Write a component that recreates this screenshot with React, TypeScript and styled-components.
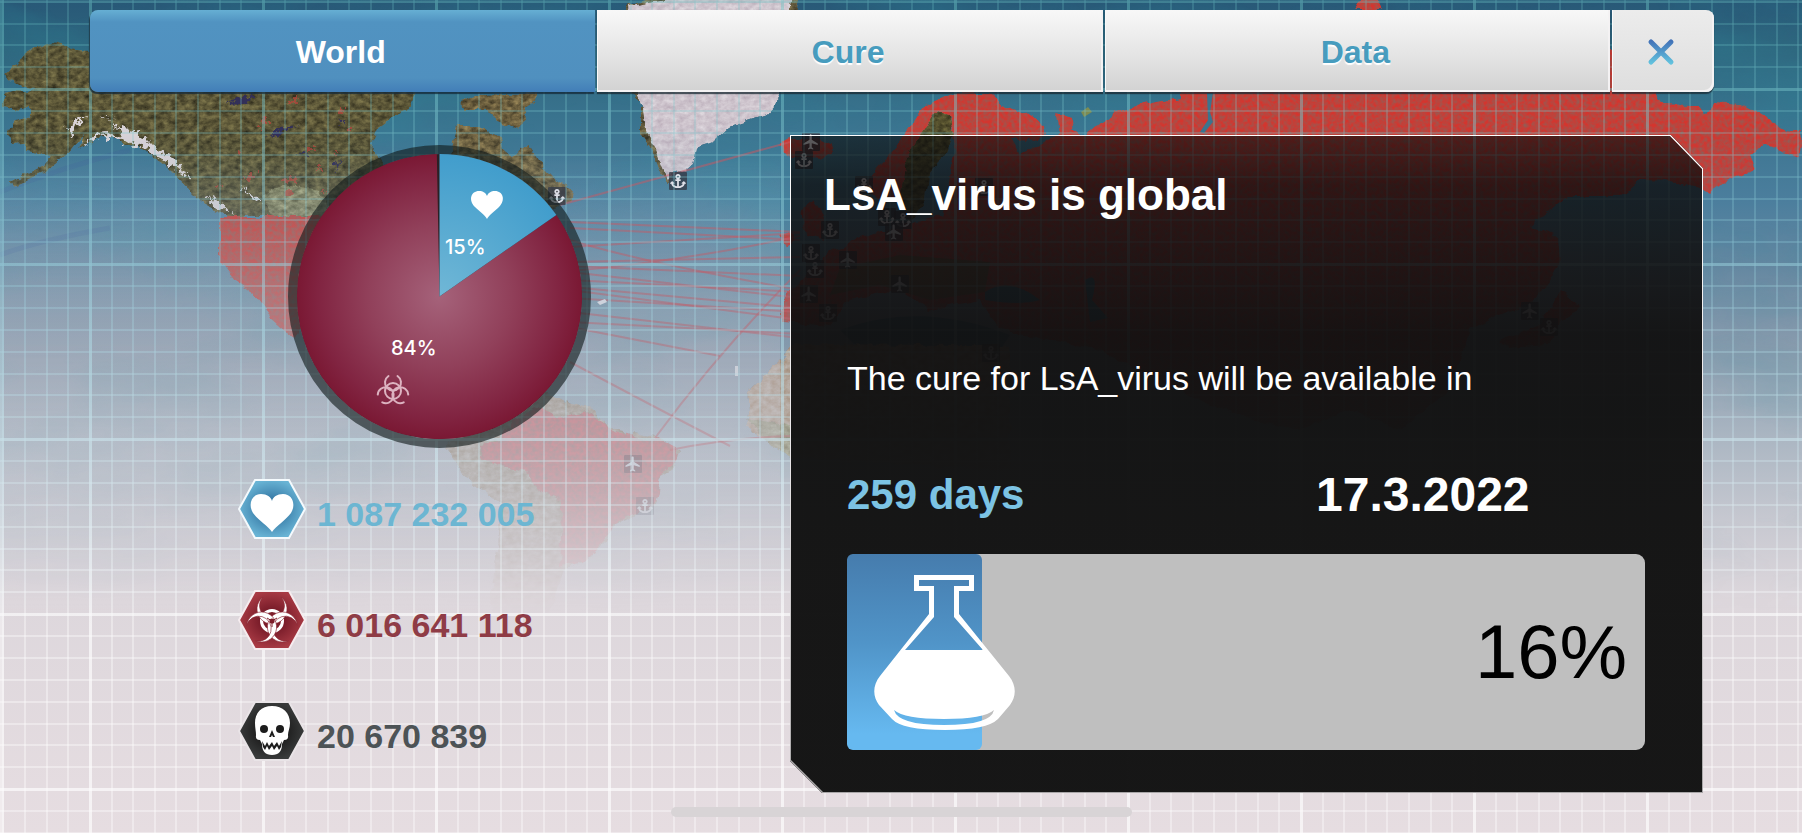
import React, { useState } from "react";
import styled, { createGlobalStyle, css } from "styled-components";
import { FaAnchor } from "react-icons/fa";
import { MdFlight } from "react-icons/md";

const GlobalStyle = createGlobalStyle`
  *, *::before, *::after { box-sizing: border-box; }
  body {
    margin: 0;
    background: #e5dce0;
    font-family: "Liberation Sans", Arial, Helvetica, sans-serif;
  }
`;

const Page = styled.div`
  position: relative;
  display: flex;
  flex-direction: column;
  min-height: 100vh;
  overflow: hidden;
`;

/* ---------- world map backdrop ---------- */

const Backdrop = styled.svg`
  position: absolute;
  inset: 0;
  width: 100%;
  height: 100%;

  filter {
    color-interpolation-filters: sRGB;
  }
`;

type Marker = { kind: "port" | "airport"; x: number; y: number };

const markers: Marker[] = [
  { kind: "port", x: 678, y: 181 },
  { kind: "port", x: 557, y: 196 },
  { kind: "airport", x: 811, y: 142 },
  { kind: "port", x: 804, y: 160 },
  { kind: "port", x: 864, y: 185 },
  { kind: "port", x: 984, y: 187 },
  { kind: "port", x: 887, y: 217 },
  { kind: "port", x: 903, y: 220 },
  { kind: "port", x: 830, y: 230 },
  { kind: "airport", x: 894, y: 232 },
  { kind: "port", x: 811, y: 253 },
  { kind: "port", x: 815, y: 269 },
  { kind: "airport", x: 848, y: 260 },
  { kind: "airport", x: 900, y: 284 },
  { kind: "airport", x: 809, y: 294 },
  { kind: "port", x: 828, y: 313 },
  { kind: "port", x: 991, y: 353 },
  { kind: "airport", x: 1530, y: 311 },
  { kind: "port", x: 1549, y: 327 },
  { kind: "airport", x: 633, y: 464 },
  { kind: "port", x: 645, y: 506 },
];

const routes = [
  "M560 205 L790 142",
  "M570 222 L800 232",
  "M570 228 L800 240",
  "M570 247 L800 233",
  "M560 272 Q680 262 800 236",
  "M570 240 Q640 262 800 290",
  "M570 262 L800 257",
  "M570 266 L800 276",
  "M570 272 L800 298",
  "M570 280 L800 292",
  "M570 287 L800 308",
  "M570 290 L800 320",
  "M570 298 L800 312",
  "M570 312 L800 338",
  "M570 322 L800 334",
  "M575 328 L720 356",
  "M655 438 Q720 350 800 270",
  "M570 362 Q660 410 730 446",
  "M670 450 Q730 438 790 436",
];

const WorldMap = () => (
  <Backdrop viewBox="0 0 1802 833" preserveAspectRatio="xMidYMin slice" aria-hidden="true">
    <defs>
      <linearGradient id="sea" x1="0" y1="0" x2="0" y2="1">
        <stop offset="0" stopColor="#285877" />
        <stop offset="0.06" stopColor="#2f667e" />
        <stop offset="0.14" stopColor="#39738e" />
        <stop offset="0.24" stopColor="#4b7e9d" />
        <stop offset="0.32" stopColor="#6588a1" />
        <stop offset="0.42" stopColor="#8a9cae" />
        <stop offset="0.53" stopColor="#acb7c3" />
        <stop offset="0.63" stopColor="#c8c9d1" />
        <stop offset="0.72" stopColor="#ddd7dc" />
        <stop offset="1" stopColor="#e6dde1" />
      </linearGradient>
      <linearGradient id="fade" gradientUnits="userSpaceOnUse" x1="0" y1="0" x2="0" y2="833">
        <stop offset="0.15" stopColor="#fff" />
        <stop offset="0.3" stopColor="#ccc" />
        <stop offset="0.42" stopColor="#a0a0a0" />
        <stop offset="0.54" stopColor="#747474" />
        <stop offset="0.64" stopColor="#383838" />
        <stop offset="0.74" stopColor="#000" />
      </linearGradient>
      <linearGradient id="haze" gradientUnits="userSpaceOnUse" x1="0" y1="0" x2="0" y2="833">
        <stop offset="0.18" stopColor="#fff" stopOpacity="0" />
        <stop offset="0.36" stopColor="#f2e2e6" stopOpacity="0.26" />
        <stop offset="0.5" stopColor="#f2e2e6" stopOpacity="0.32" />
      </linearGradient>
      <mask id="mapMask" maskUnits="userSpaceOnUse" x="0" y="0" width="1802" height="833">
        <rect width="1802" height="833" fill="url(#fade)" />
      </mask>
      <filter id="terrain" x="-5%" y="-5%" width="110%" height="110%">
        <feTurbulence type="fractalNoise" baseFrequency="0.09" numOctaves="3" seed="4" result="edge" />
        <feDisplacementMap in="SourceGraphic" in2="edge" scale="8" xChannelSelector="R" yChannelSelector="G" result="land" />
        <feTurbulence type="fractalNoise" baseFrequency="0.14 0.2" numOctaves="4" seed="9" result="noise" />
        <feColorMatrix in="noise" type="matrix" values="0.9 0 0 0 -0.02  0.9 0 0 0 -0.02  0.9 0 0 0 -0.02  0 0 0 0 0.6" result="grain" />
        <feBlend in="grain" in2="land" mode="overlay" result="mixed" />
        <feComposite in="mixed" in2="land" operator="in" />
      </filter>
      <filter id="infected" x="-5%" y="-5%" width="110%" height="110%">
        <feTurbulence type="fractalNoise" baseFrequency="0.08" numOctaves="3" seed="2" result="edge" />
        <feDisplacementMap in="SourceGraphic" in2="edge" scale="8" xChannelSelector="R" yChannelSelector="G" result="land" />
        <feTurbulence type="fractalNoise" baseFrequency="0.25" numOctaves="2" seed="7" result="noise" />
        <feColorMatrix in="noise" type="matrix" values="0 0 0 0 0.58  0 0 0 0 0.36  0 0 0 0 0.33  1.6 0 0 0 -0.45" result="grain" />
        <feMerge result="mixed">
          <feMergeNode in="land" />
          <feMergeNode in="grain" />
        </feMerge>
        <feComposite in="mixed" in2="land" operator="in" />
      </filter>
      <filter id="waves" x="0" y="0" width="100%" height="100%">
        <feTurbulence type="fractalNoise" baseFrequency="0.006 0.014" numOctaves="5" seed="12" />
        <feColorMatrix type="matrix" values="0 0 0 0 0.18  0 0 0 0 0.55  0 0 0 0 0.62  2.4 0 0 0 -1" />
      </filter>
      <filter id="specks" x="-5%" y="-5%" width="110%" height="110%">
        <feTurbulence type="fractalNoise" baseFrequency="0.18" numOctaves="3" seed="3" result="noise" />
        <feDisplacementMap in="SourceGraphic" in2="noise" scale="14" xChannelSelector="R" yChannelSelector="G" />
      </filter>
      <linearGradient id="gridTint" gradientUnits="userSpaceOnUse" x1="0" y1="0" x2="0" y2="833">
        <stop offset="0" stopColor="#6cc3c4" />
        <stop offset="0.3" stopColor="#94cfdc" />
        <stop offset="0.6" stopColor="#dcecf2" />
        <stop offset="0.75" stopColor="#ffffff" />
      </linearGradient>
      <linearGradient id="gridStrength" gradientUnits="userSpaceOnUse" x1="0" y1="0" x2="0" y2="833">
        <stop offset="0" stopColor="#000" stopOpacity="0.4" />
        <stop offset="0.25" stopColor="#000" stopOpacity="0.3" />
        <stop offset="0.6" stopColor="#000" stopOpacity="0.1" />
      </linearGradient>
      <pattern id="gridLines" patternUnits="userSpaceOnUse" x="89" y="88" width="173" height="175">
        {[1, 2, 3, 4, 5, 6, 7].map((n) => (
          <React.Fragment key={n}>
            <rect x={Math.round(n * 21.6)} y="0" width="2" height="175" fill="#fff" fillOpacity="0.4" />
            <rect x="0" y={Math.round(n * 21.9)} width="173" height="2" fill="#fff" fillOpacity="0.4" />
          </React.Fragment>
        ))}
        <rect x="0" y="0" width="3" height="175" fill="#fff" fillOpacity="0.7" />
        <rect x="0" y="0" width="173" height="3" fill="#fff" fillOpacity="0.7" />
      </pattern>
      <mask id="gridMask" maskUnits="userSpaceOnUse" x="0" y="0" width="1802" height="833">
        <rect width="1802" height="833" fill="url(#gridLines)" />
        <rect x="0" y="0" width="4" height="833" fill="#fff" fillOpacity="0.5" />
        <rect x="0" y="0" width="1802" height="3" fill="#fff" fillOpacity="0.3" />
        <rect width="1802" height="833" fill="url(#gridStrength)" />
      </mask>
    </defs>

    <rect width="1802" height="833" fill="url(#sea)" />
    <g mask="url(#mapMask)">
      <rect width="1802" height="620" filter="url(#waves)" opacity="0.25" />
      <path d="M0 255 Q40 240 110 228 M0 192 Q60 168 130 150" stroke="#3f6398" strokeWidth="5" strokeOpacity="0.3" fill="none" />

      <g filter="url(#terrain)">
        <path
          fill="#645e3c"
          d="M5 74 L12 68 20 64 23 56 36 48 54 42 64 45 76 50 92 51 H420 L415 95 406 112 388 120 377 128 371 143 377 155 384 166 V320 H300 L292 235 288 216 H228 L206 206 196 196 180 181 166 166 146 151 126 143 103 135 96 140 79 148 84 134 70 152 48 170 14 186 10 182 44 166 50 155 26 151 26 144 12 145 6 134 14 122 31 115 31 106 20 110 3 106 3 94 16 91 28 93 34 88 16 83Z"
        />
        <path fill="#776844" d="M457 126 L474 126 501 137 503 150 513 158 526 144 537 160 557 180 573 190 572 199 560 206 520 230 440 210 452 152Z" />
        <path fill="#776844" d="M457 102 L475 95 536 93 535 101 526 107 527 121 517 129 497 121 486 110 465 110Z" />
        <path fill="#8b8a64" d="M262 196 L282 184 320 190 330 216 272 216Z" />
        <path fill="#6b6142" d="M625 6 L660 -4 800 -4 786 60 640 108 640 133 652 152 658 168 668 184 690 150 631 94Z" />
      </g>
      <g filter="url(#specks)" fill="#d9d3d8">
        <path d="M66 130 L78 120 90 117 76 126 72 138Z M98 115 L116 118 104 117Z M82 144 L96 134 108 133 124 136 114 126 134 130 148 140 160 152 174 158 182 170 192 178 186 176 170 164 158 156 140 146 122 140 104 136Z M206 195 L222 203 232 214 216 207Z M240 184 L262 202 256 202Z" />
      </g>
      <g filter="url(#specks)" fill="#b8453c" opacity="0.7">
        <path d="M244 174 h12 v6 h-12Z M284 178 h14 v4 h-14Z M262 118 h7 v4 h-7Z M290 99 h9 v3 h-9Z M316 168 h8 v3 h-8Z M310 146 h5 v4 h-5Z M236 150 h5 v3 h-5Z M334 150 h5 v4 h-5Z M286 192 h7 v4 h-7Z M322 190 h5 v3 h-5Z M256 126 h5 v3 h-5Z M348 128 h6 v3 h-6Z M216 184 h5 v3 h-5Z M340 108 h5 v3 h-5Z" />
      </g>
      <path filter="url(#specks)" d="M228 104 Q236 94 254 98 Q242 106 228 104Z M266 138 L280 128 300 125 280 134Z M296 153 L304 150 308 154Z M334 168 l4 -8 l2 4 l-4 8Z M338 122 l8 -4 l0 6Z" fill="#332f58" />
      <path
        filter="url(#terrain)"
        fill="#d2c9d1"
        d="M628 6 L690 -4 792 -4 782 60 778 103 767 115 745 122 728 128 713 142 696 148 692 165 686 170 674 174 668 180 661 165 656 150 646 132 643 110 636 92Z"
      />

      <g filter="url(#infected)" fill="#d4352e">
        <path d="M220 216 H420 V330 H300 L296 338 286 332 272 320 268 312 254 294 234 281 220 262Z" />
        <path d="M780 143 L790 137 802 141 816 138 831 146 833 153 822 160 804 159 790 156Z" />
        <path d="M1355 10 L1362 0 1376 -2 1382 10Z" />
        <path
          d="M953 93 L925 105 912 125 898 145 880 165 864 186 872 196 892 200 905 198 928 140 950 116 954 150 948 190 942 215 900 226 862 236 845 246 830 252 792 290 782 300 782 322 830 326 850 300 900 290 930 310 980 300 1000 330 1100 350 1200 400 1250 420 1300 430 1350 410 1400 430 1450 390 1470 330 1500 316 1525 306 1545 290 1560 260 1558 236 1530 227 1568 197 1620 197 1640 180 1665 181 1700 188 1709 193 1730 179 1756 170 1750 155 1764 143 1782 151 1800 156 1802 132 1786 130 1762 115 1742 104 1714 102 1706 113 1700 105 1662 104 1655 93 1640 50 H1180 V98 L1150 103 1112 113 1086 136 1074 128 1071 118 1057 114 1061 132 1030 150 1020 155 1010 138 1036 141 1046 134 1044 124 1030 115 1002 104 990 93Z"
        />
        <path d="M800 212 L814 200 824 215 823 240 806 234Z M780 236 L790 230 797 240 786 248Z" />
        <path d="M1560 290 L1582 308 1560 320 1550 345 1508 348 1500 340 1540 325Z" />
      </g>
      <path d="M1207 93 L1213 93 1210 112 1213 122 1204 133 1200 132 1208 120Z" fill="#3b748e" />
      <path d="M936 112 L950 116 953 135 945 155 928 175 925 200 910 222 900 200 905 165 916 140Z" fill="#5a5530" filter="url(#terrain)" />
      <path d="M1081 112 L1088 107 1092 112 1084 117Z" fill="#7d8b52" />
      <path d="M840 268 L900 255 990 262 985 292 930 300 880 285 830 295Z" fill="#5d6038" opacity="0.7" />
      <path d="M985 292 Q1010 276 1040 300 Q1020 306 985 300Z M1085 280 Q1100 270 1092 300 L1108 318 1090 322Z M840 330 Q920 300 1010 335 L1000 350 860 350Z" fill="#31708c" />
      <path filter="url(#terrain)" fill="#c9a98c" d="M795 344 L783 358 764 376 748 392 750 412 746 428 770 442 794 458 1010 470 1010 345Z" />
      <path filter="url(#terrain)" fill="#a59a6c" d="M746 418 L795 426 V460 L770 444Z" />

      <path
        filter="url(#terrain)"
        fill="#b09c82"
        d="M500 380 L557 397 573 403 593 408 602 420 617 430 660 438 679 452 674 466 660 476 658 493 653 507 630 517 612 526 606 540 583 563 564 568 555 600 520 650 500 650 490 600 498 543 500 503 472 484 458 467 445 448Z"
      />
      <path
        filter="url(#infected)"
        fill="#ea4a4c"
        d="M500 440 L510 425 535 407 550 412 556 418 592 411 602 422 617 431 637 438 660 439 676 447 679 454 674 466 660 476 658 493 653 507 630 517 612 526 606 540 583 563 560 566 562 502 540 492 526 472 498 466 480 456 481 446Z"
      />
      <path d="M0 150 H780 V833 H0Z" fill="url(#haze)" />

      <g fill="none" stroke="#d8545c" strokeWidth="2" strokeOpacity="0.5">
        {routes.map((d) => (
          <path key={d} d={d} />
        ))}
      </g>
      <path d="M597 302 l8 -3 l2 3 l-7 3Z M735 366 l3 0 l0 10 l-3 0Z" fill="#f3eef2" />

      {markers.map(({ kind, x, y }) => (
        <g key={`${x}-${y}`}>
          <rect x={x - 9} y={y - 9} width="18" height="18" rx="1" fill="#33333f" fillOpacity={y > 400 ? 0.4 : 0.8} />
          {kind === "port" ? (
            <FaAnchor x={x - 8} y={y - 8} size={16} color="#efeaf0" />
          ) : (
            <MdFlight x={x - 9} y={y - 9} size={18} color="#efeaf0" />
          )}
        </g>
      ))}
    </g>
    <rect width="1802" height="833" fill="url(#gridTint)" mask="url(#gridMask)" />
  </Backdrop>
);

/* ---------- tab bar ---------- */

const TabBar = styled.nav`
  position: relative;
  display: grid;
  grid-template-columns: 1fr 1fr 1fr 102px;
  gap: 2px;
  height: 82px;
  margin: 10px 88px 0 90px;
`;

const barButton = css`
  display: flex;
  align-items: center;
  justify-content: center;
  padding: 2px 4px 0 0;
  border: 0;
  cursor: pointer;
  box-shadow: inset -2px -2px 0 #f4f2f3, inset 1px 0 0 #fafafa, 0 2px 1px rgba(25, 40, 50, 0.75);
`;

const Tab = styled.button<{ $active: boolean }>`
  ${barButton}
  font: bold 32px/40px "Liberation Sans", Arial, sans-serif;
  color: #479cbe;
  text-shadow: 0 2px 1px #ffffff;
  background: linear-gradient(#f8f8f8, #e4e4e4 55%, #d2d2d2);

  &:first-child {
    border-radius: 8px 0 0 8px;
  }

  ${({ $active }) =>
    $active &&
    css`
      color: #ffffff;
      text-shadow: none;
      background: linear-gradient(#66afd3, #5193c1 12px, #5090bf 68px, #427eb8);
      box-shadow: -1px 2px 1px rgba(20, 40, 55, 0.8);
    `}
`;

const CloseButton = styled.button`
  ${barButton}
  border-radius: 0 8px 8px 0;
  background: linear-gradient(#ececec, #dedede);
`;

/* ---------- main area ---------- */

const Main = styled.main`
  position: relative;
  flex: 1;
  display: grid;
  grid-template-columns: 702fr 913fr;
  padding: 43px 99px 0 88px;
`;

const Overview = styled.section`
  display: flex;
  flex-direction: column;
  align-items: center;
  gap: 31px;
  padding-top: 10px;
`;

const Chart = styled.svg`
  width: 303px;
  height: 303px;
`;

const ChartLabel = styled.text`
  font: 500 20px Inter, sans-serif;
  fill: #ffffff;
`;

const StatList = styled.ul`
  display: flex;
  flex-direction: column;
  gap: 51px;
  width: 402px;
  margin: 0;
  padding: 0;
  list-style: none;
`;

const Stat = styled.li`
  display: flex;
  align-items: flex-end;
  gap: 11px;
  height: 60px;
`;

const StatIcon = styled.svg`
  width: 68px;
  height: 60px;
`;

const StatValue = styled.span<{ $color: string }>`
  font-size: 34px;
  font-weight: bold;
  line-height: 50px;
  white-space: nowrap;
  color: ${({ $color }) => $color};
`;

const SmallBiohazard = ({ x, y }: { x: number; y: number }) => (
  <g transform={`translate(${x} ${y})`} fill="none" stroke="#eccbd6" strokeWidth="2" strokeLinecap="round" opacity="0.85">
    <circle r="8" />
    {[0, 120, 240].map((angle) => (
      <path key={angle} transform={`rotate(${angle})`} d="M-4.5 -15 A8 8 0 1 0 4.5 -15" />
    ))}
  </g>
);

const slicePoint = (share: number, radius: number) => {
  const angle = share * 2 * Math.PI;
  return `${(151.5 + radius * Math.sin(angle)).toFixed(2)} ${(151.5 - radius * Math.cos(angle)).toFixed(2)}`;
};

const InfectionChart = () => (
  <Chart viewBox="0 0 303 303" role="img" aria-label="15% healthy, 84% infected">
    <defs>
      <radialGradient id="infectedSlice" gradientUnits="userSpaceOnUse" cx="151.5" cy="151.5" r="143">
        <stop offset="0" stopColor="#a5627a" />
        <stop offset="0.5" stopColor="#91405a" />
        <stop offset="0.85" stopColor="#812441" />
        <stop offset="1" stopColor="#7a1833" />
      </radialGradient>
      <radialGradient id="healthySlice" gradientUnits="userSpaceOnUse" cx="151.5" cy="151.5" r="143">
        <stop offset="0" stopColor="#70b7d6" />
        <stop offset="1" stopColor="#419dcc" />
      </radialGradient>
    </defs>
    <circle cx="151.5" cy="151.5" r="147" fill="none" stroke="#121b1b" strokeOpacity="0.62" strokeWidth="9" />
    <circle cx="151.5" cy="151.5" r="142.5" fill="#2b2025" />
    <path d={`M151.5 151.5 L${slicePoint(0.153, 142.5)} A142.5 142.5 0 1 1 ${slicePoint(0.997, 142.5)}Z`} fill="url(#infectedSlice)" />
    <path d={`M151.5 151.5 L${slicePoint(0, 142.5)} A142.5 142.5 0 0 1 ${slicePoint(0.153, 142.5)}Z`} fill="url(#healthySlice)" />
    <path d="M199 74 C197 70 191 66 187 62 C180 55 183 46 191 46 C195 46 198 48 199 51 C200 48 203 46 207 46 C215 46 218 55 211 62 C207 66 201 70 199 74Z" fill="#fff" />
    <ChartLabel x="157" y="109">15%</ChartLabel>
    <ChartLabel x="103" y="210">84%</ChartLabel>
    <SmallBiohazard x={105} y={246} />
  </Chart>
);

const Hexagon = ({ id, inner, outer, edge, children }: { id: string; inner: string; outer: string; edge: string; children: React.ReactNode }) => (
  <StatIcon viewBox="0 0 68 60" aria-hidden="true">
    <defs>
      <radialGradient id={id}>
        <stop offset="0.4" stopColor={inner} />
        <stop offset="1" stopColor={outer} />
      </radialGradient>
    </defs>
    <path d="M17 1 H51 L67 30 51 59 H17 L1 30Z" fill={`url(#${id})`} stroke={edge} strokeWidth="2" />
    {children}
  </StatIcon>
);

const HealthyIcon = () => (
  <Hexagon id="hexHealthy" inner="#3c80ab" outer="#68b3d4" edge="#f4fafd">
    <path d="M34 53 C30 47 20 41 15 34 C10 26 13 15 23 15 C29 15 33 18 34 22 C35 18 39 15 45 15 C55 15 58 26 53 34 C48 41 38 47 34 53Z" fill="#fff" />
  </Hexagon>
);

const InfectedIcon = () => (
  <Hexagon id="hexInfected" inner="#7c1e2b" outer="#a83a44" edge="#f6ecef">
    <g transform="translate(34 31)">
      <circle r="10.5" fill="none" stroke="#fff" strokeWidth="3" />
      {[0, 120, 240].map((angle) => (
        <path
          key={angle}
          transform={`rotate(${angle})`}
          d="M-9 -24 A15 15 0 1 0 9 -24 A12.5 12.5 0 1 1 -9 -24Z"
          fill="#fff"
          stroke="#8c2633"
          strokeWidth="0.6"
        />
      ))}
      <circle r="2.6" fill="#7c1e2b" />
      <path d="M0 0 V6 M0 0 L5 -3 M0 0 L-5 -3" stroke="#7c1e2b" strokeWidth="1" />
    </g>
  </Hexagon>
);

const DeadIcon = () => (
  <Hexagon id="hexDead" inner="#1c1c1c" outer="#393b3b" edge="#e9e4e7">
    <path
      d="M34 5 C45 5 52 12 52 22 C52 27 50 30 50 34 Q51 39 46 39 L44 43 Q44 54 34 54 Q24 54 24 43 L22 39 Q17 39 18 34 C18 30 17 27 17 22 C17 12 23 5 34 5Z"
      fill="#fff"
    />
    <ellipse cx="26" cy="28" rx="4" ry="4" fill="#1c1c1c" />
    <ellipse cx="42" cy="28" rx="4" ry="4" fill="#1c1c1c" />
    <path d="M34 29 L31 36 33 36 34 34 35 36 37 36Z" fill="#1c1c1c" />
    <path d="M24 40 L27 45 29 41 31 45 34 41 36 45 39 41 41 45 44 40 43 46 41 49 39 45 36 49 34 45 31 49 29 45 27 49 25 46Z" fill="#1c1c1c" />
  </Hexagon>
);

/* ---------- cure panel ---------- */

const Panel = styled.section`
  position: relative;
  display: flex;
  flex-direction: column;
  padding: 34px 58px 43px 57px;
  color: #ffffff;
  background: linear-gradient(
    rgba(8, 8, 8, 0.62),
    rgba(10, 8, 8, 0.78) 50px,
    rgba(13, 11, 11, 0.87) 130px,
    rgba(14, 13, 13, 0.94) 200px,
    rgba(16, 16, 16, 0.97) 290px,
    rgba(20, 20, 20, 0.99) 400px
  );
  clip-path: polygon(0 0, calc(100% - 32px) 0, 100% 33px, 100% 100%, 32px 100%, 0 calc(100% - 32px));

  &::before {
    content: "";
    position: absolute;
    inset: 0;
    background: linear-gradient(#ffffff, #e8e4e6 50%, #a8a6a7);
    clip-path: polygon(
      evenodd,
      0 0, calc(100% - 32px) 0, 100% 33px, 100% 100%, 32px 100%, 0 calc(100% - 32px), 0 0,
      1px 1px, calc(100% - 33px) 1px, calc(100% - 1px) 34px, calc(100% - 1px) calc(100% - 1px), 33px calc(100% - 1px), 1px calc(100% - 33px), 1px 1px
    );
  }
`;

const Title = styled.h1`
  margin: 0 0 137px -23px;
  font-size: 44px;
  line-height: 52px;
`;

const Message = styled.p`
  margin: 0 0 69px;
  font-size: 34px;
  line-height: 40px;
`;

const Estimate = styled.div`
  display: grid;
  grid-template-columns: 469fr 329fr;
  margin-bottom: 31px;
  font-weight: bold;
  line-height: 56px;
`;

const Remaining = styled.span`
  font-size: 42px;
  color: #7cc3e4;
`;

const ReadyDate = styled.time`
  font-size: 48px;
`;

const ProgressBar = styled.div`
  position: relative;
  display: flex;
  align-items: center;
  justify-content: space-between;
  height: 196px;
  padding: 0 18px 0 27px;
  border-radius: 9px;
  background: #bfbfbf;
`;

const ProgressFill = styled.div`
  position: absolute;
  inset: 0 auto 0 0;
  border-radius: 6px;
  background: linear-gradient(#467cad, #5094c8 45%, #66b9f0 92%);
`;

const Flask = styled.svg`
  position: relative;
  width: 141px;
  height: 155px;
`;

const Percentage = styled.span`
  font-size: 76px;
  line-height: 90px;
  color: #000000;
`;

const CureProgress = ({ value }: { value: number }) => (
  <ProgressBar role="progressbar" aria-label="Cure progress" aria-valuenow={Math.floor(value)} aria-valuemin={0} aria-valuemax={100}>
    <ProgressFill style={{ width: `${value}%` }} />
    <Flask viewBox="0 0 141 155" aria-hidden="true">
      <path
        fill="#ffffff"
        fillRule="evenodd"
        d="M40 0 H100 V16 H85 V39 L135 101 C143 111 142 122 136 130 L124 144 Q113 155 71 155 Q28 155 18 144 L5 130 C-1 122 -2 111 6 101 L55 39 V16 H40Z M45 5 V11 H60 V42 L31 75 H109 L80 42 V11 H95 V5Z M20 135 Q24 150 70 150 Q117 150 120 135 Q110 144 70 144 Q30 144 20 135Z"
      />
    </Flask>
    <Percentage>{Math.floor(value)}%</Percentage>
  </ProgressBar>
);

const Footer = styled.footer`
  position: relative;
  display: flex;
  justify-content: center;
  height: 40px;
  padding-top: 14px;
`;

const HomeIndicator = styled.div`
  width: 461px;
  height: 10px;
  border-radius: 5px;
  background: #d8d4d6;
`;

const tabs = ["World", "Cure", "Data"];

export default function App() {
  const [current, setCurrent] = useState("World");

  return (
    <Page>
      <GlobalStyle />
      <WorldMap />
      <TabBar>
        {tabs.map((name) => (
          <Tab key={name} type="button" $active={name === current} aria-pressed={name === current} onClick={() => setCurrent(name)}>
            {name}
          </Tab>
        ))}
        <CloseButton type="button" aria-label="Close">
          <svg width="28" height="28" viewBox="0 0 28 28" aria-hidden="true">
            <defs>
              <linearGradient id="closeStroke" gradientUnits="userSpaceOnUse" x1="0" y1="0" x2="0" y2="28">
                <stop offset="0.1" stopColor="#4272b8" />
                <stop offset="0.9" stopColor="#62c2de" />
              </linearGradient>
            </defs>
            <path d="M4 4 L24 24 M24 4 L4 24" stroke="url(#closeStroke)" strokeWidth="5" strokeLinecap="round" />
          </svg>
        </CloseButton>
      </TabBar>
      <Main>
        <Overview>
          <InfectionChart />
          <StatList>
            <Stat>
              <HealthyIcon />
              <StatValue $color="#6cb6d2">1 087 232 005</StatValue>
            </Stat>
            <Stat>
              <InfectedIcon />
              <StatValue $color="#8f3c46">6 016 641 118</StatValue>
            </Stat>
            <Stat>
              <DeadIcon />
              <StatValue $color="#4d5356">20 670 839</StatValue>
            </Stat>
          </StatList>
        </Overview>
        <Panel>
          <Title>LsA_virus is global</Title>
          <Message>The cure for LsA_virus will be available in</Message>
          <Estimate>
            <Remaining>259 days</Remaining>
            <ReadyDate dateTime="2022-03-17">17.3.2022</ReadyDate>
          </Estimate>
          <CureProgress value={16.9} />
        </Panel>
      </Main>
      <Footer>
        <HomeIndicator />
      </Footer>
    </Page>
  );
}
